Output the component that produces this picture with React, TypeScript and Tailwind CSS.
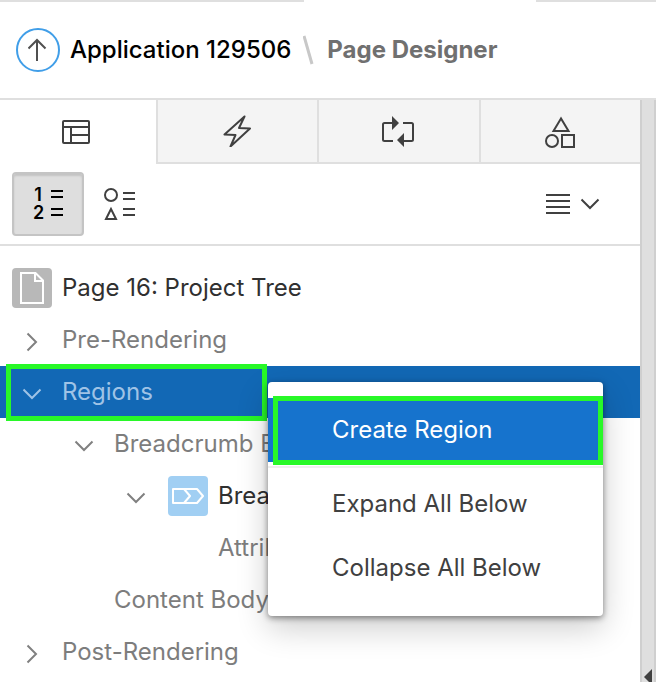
import React from "react";

type IconProps = { className?: string };

function ChevronDown({ className = "" }: IconProps) {
  return (
    <svg viewBox="0 0 20 12" className={`h-3 w-5 ${className}`} fill="none" stroke="currentColor" strokeWidth="2" aria-hidden="true">
      <path d="M1.500 1.500 10 10l8.500-8.500" />
    </svg>
  );
}

function ChevronRight({ className = "" }: IconProps) {
  return (
    <svg viewBox="0 0 12 20" className={`h-5 w-3 ${className}`} fill="none" stroke="currentColor" strokeWidth="2" aria-hidden="true">
      <path d="M1.500 1.500 10 10l-8.500 8.500" />
    </svg>
  );
}

function UpArrowIcon() {
  return (
    <svg viewBox="0 0 20 24" className="h-6 w-5" fill="none" stroke="#505050" strokeWidth="2" aria-hidden="true">
      <path d="M9 23V2M.5 10.500 9 2l8.500 8.500" />
    </svg>
  );
}

function LayoutIcon() {
  return (
    <svg viewBox="0 0 28 24" className="h-6 w-7" fill="none" stroke="#404040" strokeWidth="2" aria-hidden="true">
      <rect x="1" y="1" width="26" height="22" rx="1" />
      <path d="M1 7h26M9 7v16M9 15h18" />
    </svg>
  );
}

function BoltIcon() {
  return (
    <svg viewBox="0 0 28 32" className="h-8 w-7" fill="none" stroke="#404040" strokeWidth="2" strokeLinejoin="round" aria-hidden="true">
      <path d="M21.500 1.500 1.500 19.500 12.500 20 7.500 31.500 27 13.500 16 13Z" />
    </svg>
  );
}

function ProcessIcon() {
  return (
    <svg viewBox="0 0 34 32" className="h-8 w-[34px]" fill="none" stroke="#404040" strokeWidth="2" aria-hidden="true">
      <path d="M12 26H3.500Q2 26 2 24.500V9.500Q2 8 3.500 8H11M22 8h8.500Q32 8 32 9.500v15q0 1.500-1.500 1.500H22" />
      <path d="M11 1v14l7-7ZM23 18v14l-7-7Z" fill="#404040" stroke="none" />
    </svg>
  );
}

function ShapesIcon() {
  return (
    <svg viewBox="-2 -1 32 34" className="h-[34px] w-8" fill="none" stroke="#404040" strokeWidth="2" aria-hidden="true">
      <path d="M16 3.500 8.500 16h15Z" />
      <circle cx="7" cy="26" r="6" />
      <rect x="17" y="20" width="12" height="12" />
    </svg>
  );
}

function NumberedListIcon() {
  return (
    <span className="flex flex-col text-black">
      {["1", "2"].map((digit) => (
        <span key={digit} className="flex h-[18px] items-center gap-2">
          <span className="w-[10px] text-center text-lg/[18px] font-semibold">{digit}</span>
          <svg viewBox="0 0 12 10" className="h-[10px] w-3" stroke="currentColor" strokeWidth="2" aria-hidden="true">
            <path d="M0 1h12M0 7h12" />
          </svg>
        </span>
      ))}
    </span>
  );
}

function ShapeListIcon() {
  return (
    <svg viewBox="0 0 32 32" className="h-8 w-8" fill="none" stroke="#404040" strokeWidth="2" aria-hidden="true">
      <circle cx="7" cy="7" r="6" />
      <path d="M7 21 2 31h10ZM19 5h12M19 11h12M19 21h12M19 27h12" />
    </svg>
  );
}

function LinesIcon() {
  return (
    <svg viewBox="0 0 24 20" className="h-5 w-6" stroke="#404040" strokeWidth="2" aria-hidden="true">
      <path d="M0 1h24M0 7h24M0 13h24M0 19h24" />
    </svg>
  );
}

function PageIcon() {
  return (
    <span className="flex size-10 shrink-0 items-center justify-center rounded bg-[#b8b8b8]">
      <svg viewBox="0 0 24 32" className="h-8 w-6" fill="none" stroke="#fff" strokeWidth="2" aria-hidden="true">
        <path d="M1 1h14.500L23 8.500V31H1ZM15 1v8h8" />
      </svg>
    </span>
  );
}

function BreadcrumbIcon() {
  return (
    <span className="flex size-10 shrink-0 items-center justify-center rounded bg-[#a1cff3]">
      <svg viewBox="0 0 32 16" className="h-4 w-8" fill="none" stroke="#fff" strokeWidth="2" strokeLinejoin="round" aria-hidden="true">
        <path d="M1 1h24l6 7-6 7H1ZM12 1l6 7-6 7" />
      </svg>
    </span>
  );
}

const tabs = [
  { label: "Rendering", icon: <LayoutIcon /> },
  { label: "Dynamic Actions", icon: <BoltIcon /> },
  { label: "Processing", icon: <ProcessIcon /> },
  { label: "Page Shared Components", icon: <ShapesIcon /> },
];

type RowProps = {
  indent?: string;
  toggle?: "open" | "closed" | "none";
  label: string;
  icon?: React.ReactNode;
  strong?: boolean;
};

function Row({ indent = "pl-3", toggle = "none", label, icon, strong }: RowProps) {
  return (
    <li role="treeitem" aria-expanded={toggle === "none" ? undefined : toggle === "open"} className={`flex h-[52px] items-center ${indent}`}>
      {toggle !== "none" && (
        <button type="button" aria-label={`Toggle ${label}`} className="flex w-10 shrink-0 justify-center pt-1 text-[#808080]">
          {toggle === "open" ? <ChevronDown /> : <ChevronRight />}
        </button>
      )}
      {icon && <span className={toggle === "none" ? "" : "ml-3"}>{icon}</span>}
      <span className={`ml-[10px] whitespace-nowrap ${strong ? "text-[#303030]" : "text-[#7d7d7d]"}`}>{label}</span>
    </li>
  );
}

function ContextMenu() {
  return (
    <div role="menu" className="absolute top-4 left-[268px] z-10 w-[335px] rounded bg-white py-4 text-[#404040] shadow-[0_2px_6px_rgba(0,0,0,0.45),0_12px_32px_rgba(0,0,0,0.2)]">
      <button type="button" role="menuitem" className="relative flex h-16 w-full items-center bg-[#1673cd] pl-16 text-white">
        Create Region
        <span className="absolute -top-0.5 right-0 -bottom-[3px] left-[5px] border-[5px] border-[#28f828]" />
      </button>
      <hr className="my-1 border-t-2 border-[#efefef]" />
      <button type="button" role="menuitem" className="flex h-16 w-full items-center pl-16">
        Expand All Below
      </button>
      <button type="button" role="menuitem" className="flex h-16 w-full items-center pl-16">
        Collapse All Below
      </button>
    </div>
  );
}

export default function App() {
  return (
    <div className="flex min-h-screen flex-col overflow-hidden bg-white font-['Inter','Liberation_Sans',sans-serif] text-2xl">
      <div className="flex h-0.5 justify-between">
        <span className="w-[304px] bg-[#dfdfdf]" />
        <span className="w-[120px] bg-[#dfdfdf]" />
      </div>
      <header className="flex h-[98px] items-center border-b-2 border-[#dfdfdf] pl-4">
        <button type="button" aria-label="Up" className="flex size-11 items-center justify-center rounded-full border-2 border-[#409ee8]">
          <UpArrowIcon />
        </button>
        <a href="#application" className="ml-[10px] font-medium text-black">Application 129506</a>
        <svg viewBox="0 0 12 30" className="mx-3 h-[30px] w-3" stroke="#c8c8c8" strokeWidth="3" aria-hidden="true">
          <path d="M1 1 9 29" />
        </svg>
        <h1 className="font-bold text-[#707070]">Page Designer</h1>
      </header>

      <div className="flex flex-1">
        <main className="min-w-0 flex-1">
          <div role="tablist" className="flex h-16">
            {tabs.map((tab, i) => (
              <button
                key={tab.label}
                type="button"
                role="tab"
                aria-label={tab.label}
                aria-selected={i === 0}
                className={
                  i === 0
                    ? "flex w-[156px] items-center justify-center pr-1"
                    : "flex flex-1 items-center justify-center border-b-2 border-l-2 border-[#dfdfdf] bg-[#f4f4f4] pr-0.5"
                }
              >
                {tab.icon}
              </button>
            ))}
          </div>

          <div className="flex h-[82px] items-center border-b-2 border-[#dfdfdf] pr-10 pl-3">
            <button type="button" aria-label="Group by processing order" className="flex h-16 w-[72px] items-center justify-center rounded border-2 border-[#c4c4c4] bg-[#dedede] shadow-[inset_0_2px_2px_rgba(0,0,0,0.12)]">
              <NumberedListIcon />
            </button>
            <button type="button" aria-label="Group by component type" className="flex h-16 w-[72px] items-center justify-center">
              <ShapeListIcon />
            </button>
            <button type="button" aria-label="Menu" className="ml-auto flex items-center gap-[10px] text-[#404040]">
              <LinesIcon />
              <ChevronDown />
            </button>
          </div>

          <ul role="tree" className="pt-4">
            <Row label="Page 16: Project Tree" icon={<PageIcon />} strong />
            <Row label="Pre-Rendering" toggle="closed" />
            <li role="treeitem" aria-expanded="true" aria-selected="true" className="relative flex h-[52px] items-center bg-[#1268b5] pl-3 text-[#9fc3e6]">
              <button type="button" aria-label="Toggle Regions" className="flex w-10 shrink-0 justify-center pt-1">
                <ChevronDown />
              </button>
              <span className="ml-[10px]">Regions</span>
              <span className="absolute -top-0.5 -bottom-[3px] left-1.5 w-[261px] border-[5px] border-[#28f828]" />
              <ContextMenu />
            </li>
            <Row label="Breadcrumb B" toggle="open" indent="pl-16" />
            <Row label="Bread" toggle="open" indent="pl-[116px]" icon={<BreadcrumbIcon />} strong />
            <Row label="Attrib" indent="pl-[208px]" />
            <Row label="Content Body" indent="pl-[104px]" />
            <Row label="Post-Rendering" toggle="closed" />
          </ul>
        </main>
        <button type="button" aria-label="Collapse pane" className="flex w-4 items-end border-x-2 border-[#cfcfcf] bg-[#dfdfdf] pl-0.5">
          <svg viewBox="0 0 8 13" className="h-[13px] w-2" fill="#404040" aria-hidden="true">
            <path d="M8 0v13H5L0 8Z" />
          </svg>
        </button>
      </div>
    </div>
  );
}
